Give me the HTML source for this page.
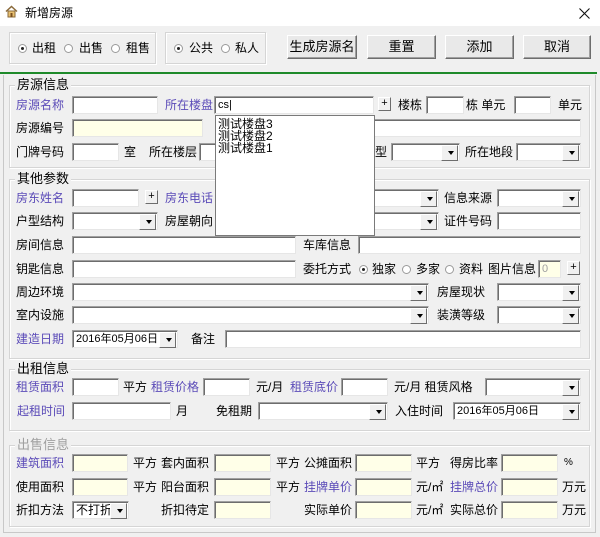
<!DOCTYPE html>
<html><head><meta charset="utf-8">
<style>
*{margin:0;padding:0;box-sizing:border-box}
body{width:600px;height:537px;background:#f0f0f0;position:relative;overflow:hidden;font:12px "Liberation Sans","Noto Sans CJK SC",sans-serif;color:#000}
div,span{position:absolute}
.tb{left:0;top:0;width:600px;height:26px;background:#fff}
.l{line-height:16px;white-space:nowrap}
.p{color:#5b4bb8}
.g{color:#a0a0a0}
.i{height:18px;background:#fff;border:1px solid;border-color:#a0a0a0 #e6e6e6 #e6e6e6 #a0a0a0;box-shadow:inset 1px 1px 0 #6d6d6d}
.y{background:#ffffe8}
.s{height:18px;background:#fff;border:1px solid;border-color:#a0a0a0 #e6e6e6 #e6e6e6 #a0a0a0;box-shadow:inset 1px 1px 0 #6d6d6d}
.s:after{content:"";position:absolute;right:1px;top:1px;width:15px;height:14px;background:#f0f0f0;border:1px solid;border-color:#fff #6d6d6d #6d6d6d #fff}
.s:before{content:"";position:absolute;right:5px;top:7px;border-left:3.5px solid transparent;border-right:3.5px solid transparent;border-top:4px solid #000;z-index:2}
.gb{border:1px solid #d5d5d5;box-shadow:inset 1px 1px 0 #fff,1px 1px 0 #fff}
.lg{background:#f0f0f0;padding:0 2px;line-height:14px;font-size:13px}
.b{height:24px;background:#e9e9e9;border:1px solid;border-color:#fff #6d6d6d #6d6d6d #fff;box-shadow:inset -1px -1px 0 #a0a0a0;text-align:center;line-height:21px;font-size:13px}
.pl{width:13px;height:14px;background:#f0f0f0;border:1px solid;border-color:#fff #6d6d6d #6d6d6d #fff;text-align:center;line-height:11px;font-size:11px}
.r{width:9px;height:9px;border-radius:50%;border:1px solid #9a9a9a;background:#fff}
.r.on:after{content:"";position:absolute;left:2px;top:2px;width:3px;height:3px;border-radius:50%;background:#222}
.t{padding-left:3px;line-height:16px;font-size:11px}
</style></head><body>
<div class="tb"></div>
<svg style="position:absolute;left:5px;top:5px" width="13" height="13" viewBox="0 0 13 13"><path d="M1 6.5L6.5 1.5L12 6.5" fill="none" stroke="#8a6a3a" stroke-width="1.5"/><rect x="3" y="6" width="7" height="6" fill="#e8c070" stroke="#8a6a3a"/><rect x="5.5" y="8" width="2" height="4" fill="#7a5020"/></svg>
<div class="l" style="left:25px;top:5px;font-size:12px">新增房源</div>
<svg style="position:absolute;left:579px;top:8px" width="11" height="11" viewBox="0 0 11 11"><path d="M0.5 0.5L10.5 10.5M10.5 0.5L0.5 10.5" stroke="#111" stroke-width="1.1"/></svg>

<div class="gb" style="left:9px;top:32px;width:147px;height:32px"></div>
<div class="r on" style="left:18px;top:44px"></div><div class="l" style="left:32px;top:40px">出租</div>
<div class="r" style="left:64px;top:44px"></div><div class="l" style="left:79px;top:40px">出售</div>
<div class="r" style="left:111px;top:44px"></div><div class="l" style="left:126px;top:40px">租售</div>
<div class="gb" style="left:165px;top:32px;width:101px;height:32px"></div>
<div class="r on" style="left:174px;top:44px"></div><div class="l" style="left:189px;top:40px">公共</div>
<div class="r" style="left:221px;top:44px"></div><div class="l" style="left:235px;top:40px">私人</div>
<div class="b" style="left:287px;top:35px;width:70px">生成房源名</div>
<div class="b" style="left:367px;top:35px;width:69px">重置</div>
<div class="b" style="left:445px;top:35px;width:69px">添加</div>
<div class="b" style="left:523px;top:35px;width:68px">取消</div>
<div style="left:0;top:72px;width:597px;height:2px;background:#1e8a2a"></div>
<div style="left:3px;top:75px;width:593px;height:458px;border:1px solid #c8c8c8;border-top:none"></div>

<div class="gb" style="left:9px;top:85px;width:581px;height:83px"></div>
<div class="lg l" style="left:15px;top:78px">房源信息</div>
<div class="l p" style="left:16px;top:97px">房源名称</div><div class="i" style="left:72px;top:96px;width:86px"></div>
<div class="l p" style="left:165px;top:97px">所在楼盘</div><div class="i t" style="left:214px;top:96px;width:160px">cs|</div>
<div class="pl" style="left:378px;top:97px">+</div>
<div class="l" style="left:398px;top:97px">楼栋</div><div class="i" style="left:426px;top:96px;width:38px"></div>
<div class="l" style="left:466px;top:97px">栋 单元</div><div class="i" style="left:514px;top:96px;width:37px"></div>
<div class="l" style="left:558px;top:97px">单元</div>
<div class="l" style="left:16px;top:120px">房源编号</div><div class="i y" style="left:72px;top:119px;width:131px"></div>
<div class="i" style="left:373px;top:119px;width:208px"></div>
<div class="l" style="left:16px;top:144px">门牌号码</div><div class="i" style="left:72px;top:143px;width:47px"></div>
<div class="l" style="left:124px;top:144px">室</div>
<div class="l" style="left:149px;top:144px">所在楼层</div><div class="i" style="left:199px;top:143px;width:20px"></div>
<div class="l" style="left:375px;top:144px">型</div><div class="s" style="left:391px;top:143px;width:69px"></div>
<div class="l" style="left:465px;top:144px">所在地段</div><div class="s" style="left:516px;top:143px;width:65px"></div>

<div class="gb" style="left:9px;top:179px;width:581px;height:180px"></div>
<div class="lg l" style="left:15px;top:172px">其他参数</div>
<div class="l p" style="left:16px;top:190px">房东姓名</div><div class="i" style="left:72px;top:189px;width:67px"></div>
<div class="pl" style="left:145px;top:190px">+</div>
<div class="l p" style="left:165px;top:190px">房东电话</div>
<div class="s" style="left:300px;top:189px;width:139px"></div>
<div class="l" style="left:444px;top:190px">信息来源</div><div class="s" style="left:497px;top:189px;width:84px"></div>
<div class="l" style="left:16px;top:213px">户型结构</div><div class="s" style="left:72px;top:212px;width:86px"></div>
<div class="l" style="left:165px;top:213px">房屋朝向</div>
<div class="s" style="left:300px;top:212px;width:139px"></div>
<div class="l" style="left:444px;top:213px">证件号码</div><div class="i" style="left:497px;top:212px;width:84px"></div>
<div class="l" style="left:16px;top:237px">房间信息</div><div class="i" style="left:72px;top:236px;width:224px"></div>
<div class="l" style="left:303px;top:237px">车库信息</div><div class="i" style="left:358px;top:236px;width:223px"></div>
<div class="l" style="left:16px;top:261px">钥匙信息</div><div class="i" style="left:72px;top:260px;width:224px"></div>
<div class="l" style="left:303px;top:261px">委托方式</div>
<div class="r on" style="left:359px;top:265px"></div><div class="l" style="left:372px;top:261px">独家</div>
<div class="r" style="left:402px;top:265px"></div><div class="l" style="left:416px;top:261px">多家</div>
<div class="r" style="left:445px;top:265px"></div><div class="l" style="left:459px;top:261px">资料</div>
<div class="l" style="left:488px;top:261px">图片信息</div><div class="i y t g" style="left:538px;top:260px;width:23px">0</div>
<div class="pl" style="left:567px;top:261px">+</div>
<div class="l" style="left:16px;top:284px">周边环境</div><div class="s" style="left:72px;top:283px;width:357px"></div>
<div class="l" style="left:437px;top:284px">房屋现状</div><div class="s" style="left:497px;top:283px;width:84px"></div>
<div class="l" style="left:16px;top:307px">室内设施</div><div class="s" style="left:72px;top:306px;width:357px"></div>
<div class="l" style="left:437px;top:307px">装潢等级</div><div class="s" style="left:497px;top:306px;width:84px"></div>
<div class="l p" style="left:16px;top:331px">建造日期</div><div class="s t" style="left:72px;top:330px;width:106px">2016年05月06日</div>
<div class="l" style="left:191px;top:331px">备注</div><div class="i" style="left:225px;top:330px;width:356px"></div>

<div class="gb" style="left:9px;top:369px;width:581px;height:62px"></div>
<div class="lg l" style="left:15px;top:362px">出租信息</div>
<div class="l p" style="left:16px;top:379px">租赁面积</div><div class="i" style="left:72px;top:378px;width:47px"></div>
<div class="l" style="left:123px;top:379px">平方</div>
<div class="l p" style="left:151px;top:379px">租赁价格</div><div class="i" style="left:203px;top:378px;width:47px"></div>
<div class="l" style="left:256px;top:379px">元/月</div>
<div class="l p" style="left:290px;top:379px">租赁底价</div><div class="i" style="left:341px;top:378px;width:47px"></div>
<div class="l" style="left:394px;top:379px">元/月 租赁风格</div><div class="s" style="left:485px;top:378px;width:96px"></div>
<div class="l p" style="left:17px;top:403px">起租时间</div><div class="i" style="left:72px;top:402px;width:99px"></div>
<div class="l" style="left:176px;top:403px">月</div>
<div class="l" style="left:216px;top:403px">免租期</div><div class="s" style="left:258px;top:402px;width:130px"></div>
<div class="l" style="left:395px;top:403px">入住时间</div><div class="s t" style="left:453px;top:402px;width:128px">2016年05月06日</div>

<div class="gb" style="left:9px;top:445px;width:581px;height:82px"></div>
<div class="lg l g" style="left:15px;top:438px">出售信息</div>
<div class="l p" style="left:16px;top:455px">建筑面积</div><div class="i y" style="left:72px;top:454px;width:56px"></div>
<div class="l" style="left:133px;top:455px">平方</div>
<div class="l" style="left:161px;top:455px">套内面积</div><div class="i y" style="left:214px;top:454px;width:57px"></div>
<div class="l" style="left:276px;top:455px">平方</div>
<div class="l" style="left:304px;top:455px">公摊面积</div><div class="i y" style="left:355px;top:454px;width:57px"></div>
<div class="l" style="left:416px;top:455px">平方</div>
<div class="l" style="left:450px;top:455px">得房比率</div><div class="i y" style="left:501px;top:454px;width:57px"></div>
<div class="l" style="left:564px;top:455px;font-size:10px">%</div>
<div class="l" style="left:16px;top:479px">使用面积</div><div class="i y" style="left:72px;top:478px;width:56px"></div>
<div class="l" style="left:133px;top:479px">平方</div>
<div class="l" style="left:161px;top:479px">阳台面积</div><div class="i y" style="left:214px;top:478px;width:57px"></div>
<div class="l" style="left:276px;top:479px">平方</div>
<div class="l p" style="left:304px;top:479px">挂牌单价</div><div class="i y" style="left:355px;top:478px;width:57px"></div>
<div class="l" style="left:416px;top:479px">元/㎡</div>
<div class="l p" style="left:450px;top:479px">挂牌总价</div><div class="i y" style="left:501px;top:478px;width:57px"></div>
<div class="l" style="left:562px;top:479px">万元</div>
<div class="l" style="left:16px;top:502px">折扣方法</div><div class="s t" style="left:72px;top:501px;width:57px;font-size:12px">不打折</div>
<div class="l" style="left:161px;top:502px">折扣待定</div><div class="i y" style="left:214px;top:501px;width:57px"></div>
<div class="l" style="left:304px;top:502px">实际单价</div><div class="i y" style="left:355px;top:501px;width:57px"></div>
<div class="l" style="left:416px;top:502px">元/㎡</div>
<div class="l" style="left:450px;top:502px">实际总价</div><div class="i y" style="left:501px;top:501px;width:57px"></div>
<div class="l" style="left:562px;top:502px">万元</div>

<div style="left:215px;top:115px;width:160px;height:121px;background:#fff;border:1px solid #7a7a7a;z-index:5;padding:2px 0 0 2px;line-height:12px;font-size:12px">
<div style="position:static">测试楼盘3</div><div style="position:static">测试楼盘2</div><div style="position:static">测试楼盘1</div></div>
</body></html>
